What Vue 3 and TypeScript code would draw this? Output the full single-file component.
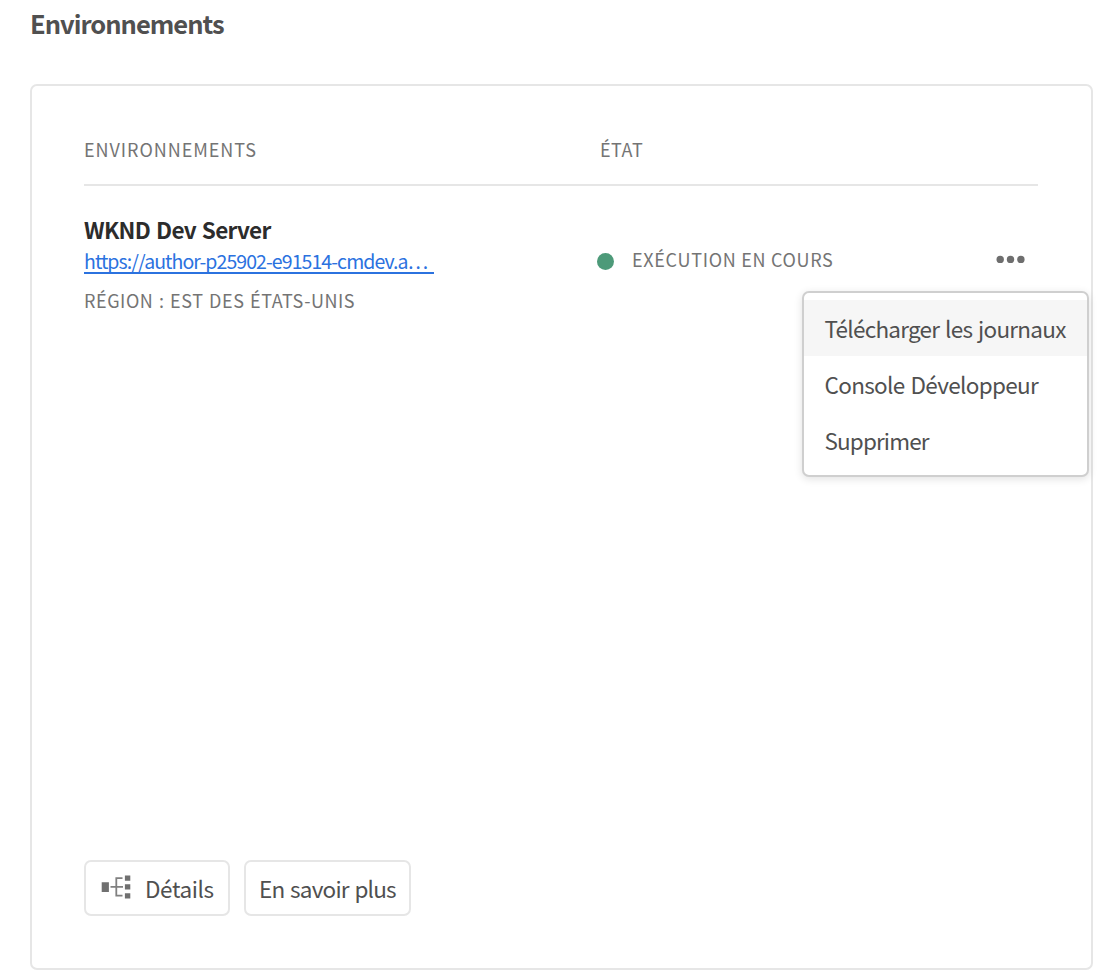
<script setup lang="ts">
interface Environment {
  name: string
  url: string
  region: string
  status: string
}

const environment: Environment = {
  name: 'WKND Dev Server',
  url: 'https://author-p25902-e91514-cmdev.a…',
  region: 'RÉGION : EST DES ÉTATS-UNIS',
  status: 'EXÉCUTION EN COURS',
}

const menuItems: { label: string; tone: string }[] = [
  { label: 'Télécharger les journaux', tone: 'download' },
  { label: 'Console Développeur', tone: 'console' },
  { label: 'Supprimer', tone: 'delete' },
]
</script>

<template>
  <main class="page">
    <h1 class="title"><span>Environnements</span></h1>
    <section class="card">
      <div class="row head">
        <span class="label head-env">ENVIRONNEMENTS</span>
        <span class="label head-state">ÉTAT</span>
      </div>
      <div class="row entry">
        <div class="info">
          <div class="name">{{ environment.name }}</div>
          <a class="link">{{ environment.url }}</a>
          <div class="label region">{{ environment.region }}</div>
        </div>
        <div class="state">
          <i class="dot"></i>
          <span class="label status">{{ environment.status }}</span>
        </div>
        <div class="actions">
          <svg class="more" width="30" height="10" viewBox="0 0 30 10">
            <circle cx="4.2" cy="4.4" r="3.7" />
            <circle cx="14.5" cy="4.4" r="3.7" />
            <circle cx="24.9" cy="4.4" r="3.7" />
          </svg>
          <div class="menu">
            <div v-for="(item, i) in menuItems" :key="item.label" class="item" :class="[item.tone, { active: i === 0 }]">
              {{ item.label }}
            </div>
          </div>
        </div>
      </div>
      <div class="footer">
        <button class="btn details">
          <svg width="30" height="26" viewBox="0 0 30 26">
            <path class="wire" d="M9.5 12.9H22M21.5 4.1H15.3V21.6H21.5" />
            <path d="M.7 8.3H7.9V18H.7zM23.9 1.4H29.3V6.7H23.9zM23.9 10.3H29.3V15.6H23.9zM23.9 19.2H29.3V24.5H23.9z" />
          </svg>
          <span>Détails</span>
        </button>
        <button class="btn learn"><span>En savoir plus</span></button>
      </div>
    </section>
  </main>
</template>

<style>
body {
  background: #fff;
}
</style>

<style scoped>
.page {
  box-sizing: border-box;
  width: 1110px;
  height: 980px;
  padding: 6px 17px 10px 30px;
  overflow: hidden;
  font-family: "Noto Sans CJK SC", "Noto Sans", sans-serif;
  color: #505050;
  white-space: nowrap;
}
.title {
  margin: 0 0 45px;
  height: 33px;
  font-size: 25.5px;
  line-height: 33px;
  font-weight: 600;
  letter-spacing: -1px;
}
.card {
  box-sizing: border-box;
  height: 886px;
  padding: 50px 53px 52px 52px;
  border: 2px solid #e6e6e6;
  border-radius: 7px;
  display: flex;
  flex-direction: column;
}
.row {
  display: grid;
  grid-template-columns: 512px 1fr 42px;
}
.label {
  font-size: 18px;
  line-height: 24px;
  letter-spacing: 0.7px;
  color: #747474;
}
.head {
  box-sizing: border-box;
  height: 50px;
  padding-top: 1px;
  border-bottom: 2px solid #e6e6e6;
}
.head-env {
  letter-spacing: 0.95px;
}
.head-state {
  padding-left: 4px;
  letter-spacing: 0.5px;
}
.entry {
  padding-top: 27px;
}
.name {
  font-size: 22.5px;
  line-height: 32px;
  font-weight: 600;
  letter-spacing: -0.7px;
  word-spacing: 1.5px;
  color: #2c2c2c;
}
.link {
  box-sizing: border-box;
  display: block;
  width: 350px;
  height: 28px;
  margin-top: 1px;
  border-bottom: 2px solid #2b72df;
  font-size: 19.5px;
  line-height: 30px;
  letter-spacing: -0.92px;
  color: #2b72df;
}
.region {
  margin-top: 14px;
  letter-spacing: 0.55px;
  word-spacing: 1px;
}
.state {
  display: flex;
  align-items: center;
  gap: 18px;
  height: 24px;
  margin-top: 34px;
}
.dot {
  width: 17px;
  height: 17px;
  margin: 4px 0 0 1px;
  border-radius: 50%;
  background: #4d9a79;
}
.actions {
  position: relative;
}
.more {
  display: block;
  margin-top: 42px;
  fill: #6e6e6e;
}
.menu {
  position: absolute;
  z-index: 2;
  top: 78px;
  right: -51px;
  box-sizing: border-box;
  width: 287px;
  height: 186px;
  padding: 7px 0;
  border: 2px solid #cfcfcf;
  border-radius: 7px;
  background: #fff;
  box-shadow: 0 2px 8px rgba(0, 0, 0, 0.12);
}
.item {
  height: 56px;
  padding-left: 20.5px;
  font-size: 22.5px;
  line-height: 56px;
  letter-spacing: -0.74px;
  word-spacing: 1.5px;
}
.console {
  letter-spacing: -0.66px;
}
.delete {
  letter-spacing: -0.87px;
}
.active {
  background: #f6f6f6;
}
.footer {
  display: flex;
  gap: 14px;
  margin-top: auto;
}
.btn {
  box-sizing: border-box;
  display: flex;
  align-items: center;
  height: 56px;
  padding: 0 0 0 13px;
  border: 2px solid #e6e6e6;
  border-radius: 7px;
  background: #fff;
  font: 22.5px/52px "Noto Sans CJK SC", "Noto Sans", sans-serif;
  letter-spacing: -0.8px;
  word-spacing: 1.5px;
  color: #505050;
}
.details {
  width: 146px;
  padding-left: 15px;
  gap: 14px;
  letter-spacing: -0.4px;
}
.details svg {
  margin-top: -2px;
  fill: #707070;
}
.wire {
  fill: none;
  stroke: #808080;
  stroke-width: 1.8;
}
.learn {
  width: 167px;
}
</style>
